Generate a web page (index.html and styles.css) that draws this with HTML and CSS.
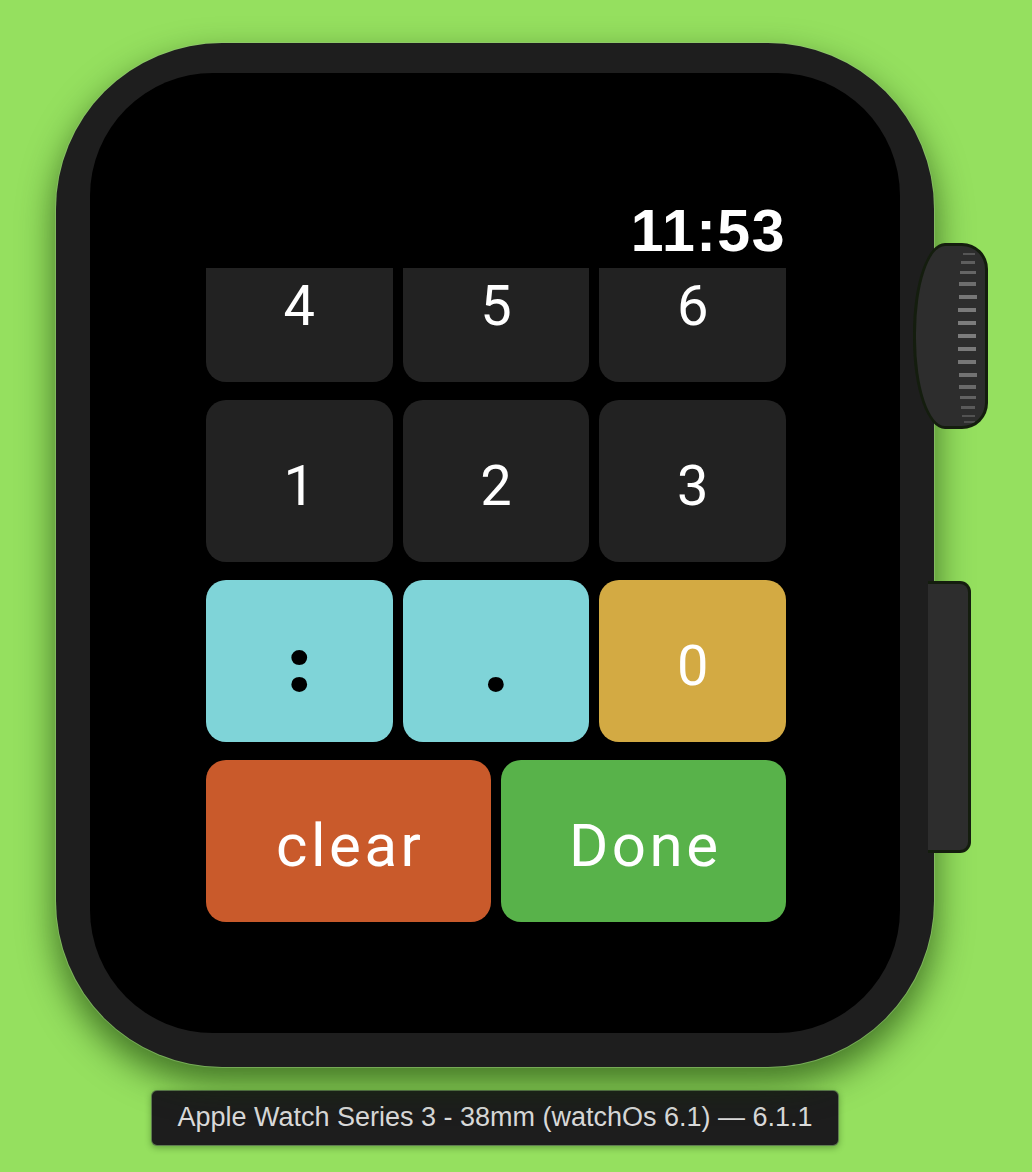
FILE: index.html
```html
<!DOCTYPE html>
<html>
<head>
<meta charset="utf-8">
<link rel="stylesheet" href="styles.css">
</head>
<body>
<div class="stage">
  <div class="device">
    <div class="case">
      <div class="screen">
        <div class="status"><span class="time">11:53</span></div>
        <div class="viewport">
          <div class="pad">
            <div class="key key-dark">4</div>
            <div class="key key-dark">5</div>
            <div class="key key-dark">6</div>
            <div class="key key-dark">1</div>
            <div class="key key-dark">2</div>
            <div class="key key-dark">3</div>
            <div class="key key-cyan"><span class="punct">:</span></div>
            <div class="key key-cyan"><span class="punct">.</span></div>
            <div class="key key-gold">0</div>
            <div class="key key-wide key-orange">clear</div>
            <div class="key key-wide key-green">Done</div>
          </div>
        </div>
      </div>
    </div>
    <div class="crown">
      <svg class="ridges" width="24" height="186" viewBox="0 0 24 186">
        <rect x="8" y="10" width="12" height="2" fill="#555"/>
        <rect x="6" y="18" width="14" height="3" fill="#5e5e5e"/>
        <rect x="5" y="28" width="16" height="3" fill="#666"/>
        <rect x="4" y="39" width="17" height="4" fill="#6e6e6e"/>
        <rect x="4" y="52" width="18" height="4" fill="#777"/>
        <rect x="3" y="65" width="18" height="4" fill="#7a7a7a"/>
        <rect x="3" y="78" width="18" height="4" fill="#7c7c7c"/>
        <rect x="3" y="91" width="18" height="4" fill="#7c7c7c"/>
        <rect x="3" y="104" width="18" height="4" fill="#7a7a7a"/>
        <rect x="3" y="117" width="18" height="4" fill="#777"/>
        <rect x="4" y="130" width="18" height="4" fill="#727272"/>
        <rect x="4" y="142" width="17" height="4" fill="#6a6a6a"/>
        <rect x="5" y="153" width="16" height="3" fill="#626262"/>
        <rect x="6" y="163" width="14" height="3" fill="#5a5a5a"/>
        <rect x="7" y="172" width="13" height="2" fill="#525252"/>
        <rect x="9" y="178" width="11" height="2" fill="#4c4c4c"/>
      </svg>
    </div>
    <div class="side-button"></div>
  </div>
  <div class="caption-row">
    <div class="caption">Apple Watch Series 3 - 38mm (watchOs 6.1) — 6.1.1</div>
  </div>
</div>
</body>
</html>
```

FILE: styles.css
```css
html, body {
  margin: 0;
  padding: 0;
}

body {
  background: #95e05f;
  width: 1032px;
  height: 1172px;
  overflow: hidden;
  font-family: Roboto, "Liberation Sans", sans-serif;
}

.stage {
  padding: 43px 0 0 56px;
  width: 878px;
}

.device {
  position: relative;
  width: 878px;
  height: 1024px;
}

.case {
  width: 878px;
  height: 1024px;
  box-sizing: border-box;
  padding: 30px 34px 34px 34px;
  background: #1e1e1e;
  border-radius: 166px;
  box-shadow: 0 0 0 1px rgba(150, 200, 120, 0.55), 0 16px 34px 2px rgba(20, 55, 5, 0.62);
}

.screen {
  width: 810px;
  height: 960px;
  background: #000;
  border-radius: 123px;
  overflow: hidden;
}

.status {
  height: 195px;
  box-sizing: border-box;
  display: flex;
  justify-content: flex-end;
  align-items: flex-end;
  padding: 0 114px 7px 0;
}

.time {
  font-family: "Liberation Sans", Arial, sans-serif;
  font-weight: 700;
  font-size: 59px;
  line-height: 1;
  color: #fff;
  letter-spacing: 1.5px;
}

.viewport {
  height: 765px;
  overflow: hidden;
}

.pad {
  margin: -48px 0 0 116px;
  width: 580px;
  display: grid;
  grid-template-columns: repeat(6, 1fr);
  grid-auto-rows: 162px;
  column-gap: 10px;
  row-gap: 18px;
}

.key {
  grid-column: span 2;
  border-radius: 20px;
  display: flex;
  align-items: center;
  justify-content: center;
  box-sizing: border-box;
  padding-top: 10px;
  color: #fff;
  font-size: 56px;
  line-height: 1;
  font-weight: 400;
}

.key-wide {
  grid-column: span 3;
  font-size: 60px;
  letter-spacing: 3.5px;
  padding-left: 3.5px;
}

.key-dark { background: #222222; }
.key-cyan { background: #7fd4d8; }
.key-gold { background: #d3aa43; }
.key-orange { background: #c95a2b; }
.key-green { background: #58b24a; }

.punct {
  color: #000;
  font-weight: 700;
  font-size: 68px;
  -webkit-text-stroke: 5px #000;
}

.crown {
  position: absolute;
  left: 857px;
  top: 200px;
  width: 75px;
  height: 186px;
  box-sizing: border-box;
  background: #2d2d2d;
  border: 3px solid #141d0e;
  border-radius: 32px 26px 26px 32px / 90px 26px 26px 90px;
  overflow: hidden;
}

.ridges {
  position: absolute;
  right: 6px;
  top: -3px;
}

.side-button {
  position: absolute;
  left: 872px;
  top: 538px;
  width: 43px;
  height: 272px;
  box-sizing: border-box;
  background: #2d2d2d;
  border: 3px solid #141d0e;
  border-left: none;
  border-radius: 0 11px 11px 0;
}

.caption-row {
  display: flex;
  justify-content: center;
  padding-top: 23px;
}

.caption {
  width: 688px;
  height: 56px;
  box-sizing: border-box;
  background: #1d1d1d;
  border: 1px solid rgba(160, 220, 130, 0.5);
  border-radius: 6px;
  box-shadow: 0 2px 6px rgba(20, 55, 5, 0.35);
  color: #dadada;
  font-family: "Liberation Sans", Arial, sans-serif;
  font-size: 27px;
  display: flex;
  align-items: center;
  justify-content: center;
  padding-bottom: 2px;
}
```
